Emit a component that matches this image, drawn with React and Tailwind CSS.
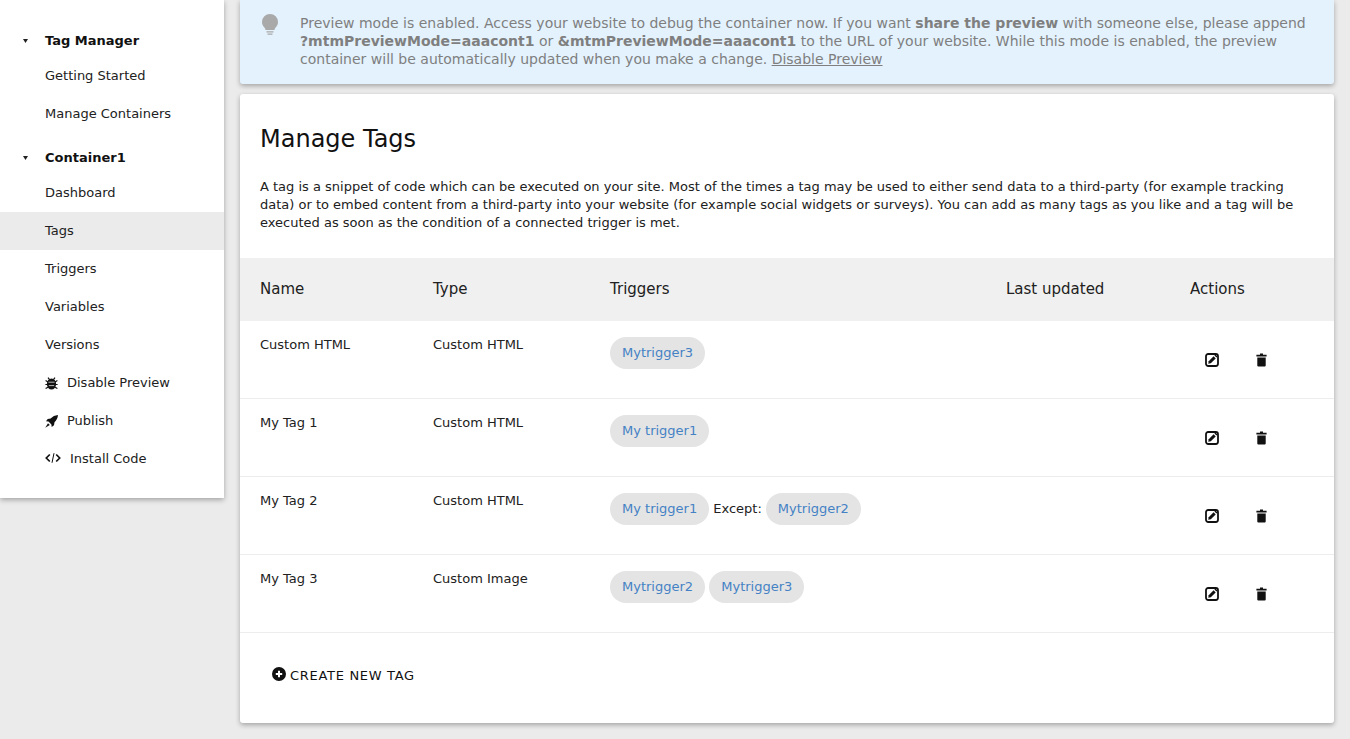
import React from "react";

const Chip = ({ children }) => (
  <span className="inline-block h-8 rounded-2xl bg-[#e4e4e4] px-3 text-[13px] leading-8 text-[#4482c4]">{children}</span>
);

const EditIcon = () => (
  <svg viewBox="0 0 14 14" className="h-[14px] w-[14px]">
    <rect x="1" y="1" width="12" height="12" rx="2.2" fill="none" stroke="#111" strokeWidth="1.8" />
    <path d="M3.2 10.8l.5-2.6L8.6 3.3l2.1 2.1-4.9 4.9z" fill="#111" />
    <path d="M9.4 2.5l2.1 2.1 1-1-2.1-2.1z" fill="#111" />
  </svg>
);

const TrashIcon = () => (
  <svg viewBox="0 0 11 14" className="ml-[37px] h-[14px] w-[11px]">
    <path d="M4 0.6h3v1.2H4zM0.4 1.8h10.2v1.8H0.4zM1.3 4.4h8.4v8.2a1 1 0 0 1-1 1H2.3a1 1 0 0 1-1-1z" fill="#111" />
  </svg>
);

const BugIcon = () => (
  <svg viewBox="0 0 13 13" className="mr-[9px] h-[13px] w-[13px]">
    <ellipse cx="6.5" cy="7" rx="4.6" ry="5.6" fill="#111" />
    <path d="M3 .6l1.600 2M10 .6L8.400 2.600M.6 3.600l2.400 1.400M12.400 3.600L10 5M.4 7.500h2.600M12.600 7.500H10M.6 11.600L3 10.200M12.400 11.600L10 10.200" stroke="#111" strokeWidth="1.200" fill="none" />
    <path d="M3.400 5.200h6.200M3.800 8.600h5.400" stroke="#fff" strokeWidth="0.7" />
  </svg>
);

const RocketIcon = () => (
  <svg viewBox="0 0 13 13" className="mr-[9px] h-[13px] w-[13px]">
    <path d="M13 0C10 .3 7.500 1.500 5.700 3.500L2.700 4 1 6.300l2.500.3L6.400 9.500l.3 2.500L9 10.300l.5-3C11.500 5.500 12.700 3 13 0z" fill="#111" />
    <path d="M3 8.200L4.800 10 .2 12.800z" fill="#111" />
  </svg>
);

const CodeIcon = () => (
  <svg viewBox="0 0 16 12" className="mr-[9px] -mt-[2px] h-[12px] w-[16px]" fill="none" stroke="#111">
    <path d="M4.800 2.500L1.300 6l3.500 3.500M11.200 2.500L14.700 6l-3.500 3.500" strokeWidth="1.700" />
    <path d="M9 1.200L7 10.800" strokeWidth="1" />
  </svg>
);

const BulbIcon = () => (
  <svg viewBox="0 0 16 21" className="mr-[22px] h-[21px] w-4 shrink-0">
    <path d="M8 0a8 8 0 0 1 8 8c0 2.400-1 3.800-2.200 5.200-.8 1-1.200 1.700-1.300 2.800h-9c-.1-1.100-.5-1.800-1.300-2.800C1 11.800 0 10.400 0 8a8 8 0 0 1 8-8z" fill="#a9a9a9" />
    <path d="M4.500 17.200h7v1.300h-7zM5.500 19.500h5V20.700h-5z" fill="#a9a9a9" />
  </svg>
);

const PlusIcon = () => (
  <svg viewBox="0 0 14 14" className="mr-1 -mt-[3px] h-[14px] w-[14px]">
    <path fillRule="evenodd" d="M7 0a7 7 0 1 1 0 14A7 7 0 0 1 7 0zM6 3.800V6H3.800v2H6v2.200h2V8h2.200V6H8V3.800z" fill="#111" />
  </svg>
);

const SideItem = ({ children, active, icon }) => (
  <div className={`flex h-[38px] items-center pl-[45px] text-[13px] text-[#212121] ${active ? "bg-[#ebebeb]" : ""}`}>
    {icon}
    {children}
  </div>
);

const SideHead = ({ children }) => (
  <div className="flex h-[33px] items-center text-[13px] font-bold text-[#111]">
    <span className="flex w-[45px] pl-[23px]">
      <svg viewBox="0 0 5 4" className="h-1 w-[5px]">
        <path d="M0 0h5L2.500 4z" fill="#222" />
      </svg>
    </span>
    {children}
  </div>
);

const rows = [
  { name: "Custom HTML", type: "Custom HTML", triggers: <Chip>Mytrigger3</Chip> },
  { name: "My Tag 1", type: "Custom HTML", triggers: <Chip>My trigger1</Chip> },
  {
    name: "My Tag 2",
    type: "Custom HTML",
    triggers: (
      <>
        <Chip>My trigger1</Chip>
        <span className="mx-1 text-[13px]">Except:</span>
        <Chip>Mytrigger2</Chip>
      </>
    ),
  },
  {
    name: "My Tag 3",
    type: "Custom Image",
    triggers: (
      <>
        <Chip>Mytrigger2</Chip> <Chip>Mytrigger3</Chip>
      </>
    ),
  },
];

const cell = "h-[78px] border-b border-[#ededed] align-top";

export default function App() {
  return (
    <div className="flex h-[739px] items-start gap-4 overflow-hidden bg-[#ebebeb] font-['DejaVu_Sans',sans-serif] text-[13px] text-[#212121]">
      <aside className="h-[498px] w-[224px] shrink-0 bg-white pt-6 shadow-[0_2px_5px_rgba(0,0,0,0.3)]">
        <SideHead>Tag Manager</SideHead>
        <SideItem>Getting Started</SideItem>
        <SideItem>Manage Containers</SideItem>
        <div className="h-2" />
        <SideHead>Container1</SideHead>
        <SideItem>Dashboard</SideItem>
        <SideItem active>Tags</SideItem>
        <SideItem>Triggers</SideItem>
        <SideItem>Variables</SideItem>
        <SideItem>Versions</SideItem>
        <SideItem icon={<BugIcon />}>Disable Preview</SideItem>
        <SideItem icon={<RocketIcon />}>Publish</SideItem>
        <SideItem icon={<CodeIcon />}>Install Code</SideItem>
      </aside>

      <main className="w-[1094px] shrink-0">
        <div className="flex h-[84px] rounded-b-[3px] bg-[#e3f2fd] pl-[22px] pr-5 pt-[14px] text-[14px] leading-[18px] text-[#7f7f7f] shadow-[0_2px_5px_rgba(0,0,0,0.3)]">
          <BulbIcon />
          <p>
            Preview mode is enabled. Access your website to debug the container now. If you want <b>share the preview</b> with someone else, please append <b>?mtmPreviewMode=aaacont1</b> or <b>&amp;mtmPreviewMode=aaacont1</b> to the URL of your website. While this mode is enabled, the preview container will be automatically updated when you make a change. <span className="underline">Disable Preview</span>
          </p>
        </div>

        <section className="mt-[10px] h-[629px] rounded-[3px] bg-white shadow-[0_2px_5px_rgba(0,0,0,0.3)]">
          <h2 className="px-5 pt-7 text-[24px] leading-[34px] text-[#111]">Manage Tags</h2>
          <p className="mt-[22px] px-5 text-[13px] leading-[18px] text-[#212121]">
            A tag is a snippet of code which can be executed on your site. Most of the times a tag may be used to either send data to a third-party (for example tracking data) or to embed content from a third-party into your website (for example social widgets or surveys). You can add as many tags as you like and a tag will be executed as soon as the condition of a connected trigger is met.
          </p>

          <table className="mt-[26px] w-full table-fixed border-separate border-spacing-0">
            <thead>
              <tr className="h-[63px] bg-[#f0f0f0] text-left text-[15px] text-[#212121]">
                <th className="w-[193px] pl-5 font-normal">Name</th>
                <th className="w-[177px] font-normal">Type</th>
                <th className="w-[396px] font-normal">Triggers</th>
                <th className="w-[184px] font-normal">Last updated</th>
                <th className="font-normal">Actions</th>
              </tr>
            </thead>
            <tbody>
              {rows.map((row) => (
                <tr key={row.name}>
                  <td className={`${cell} pl-5 pt-4 leading-[16px]`}>{row.name}</td>
                  <td className={`${cell} pt-4 leading-[16px]`}>{row.type}</td>
                  <td className={`${cell} pt-4`}>{row.triggers}</td>
                  <td className={cell} />
                  <td className={`${cell} pt-8`}>
                    <div className="flex items-center pl-[15px]">
                      <EditIcon />
                      <TrashIcon />
                    </div>
                  </td>
                </tr>
              ))}
            </tbody>
          </table>

          <div className="flex items-center pl-8 pt-[33px] text-[13px] tracking-[0.7px] text-[#111]">
            <PlusIcon />
            CREATE NEW TAG
          </div>
        </section>
      </main>
    </div>
  );
}
